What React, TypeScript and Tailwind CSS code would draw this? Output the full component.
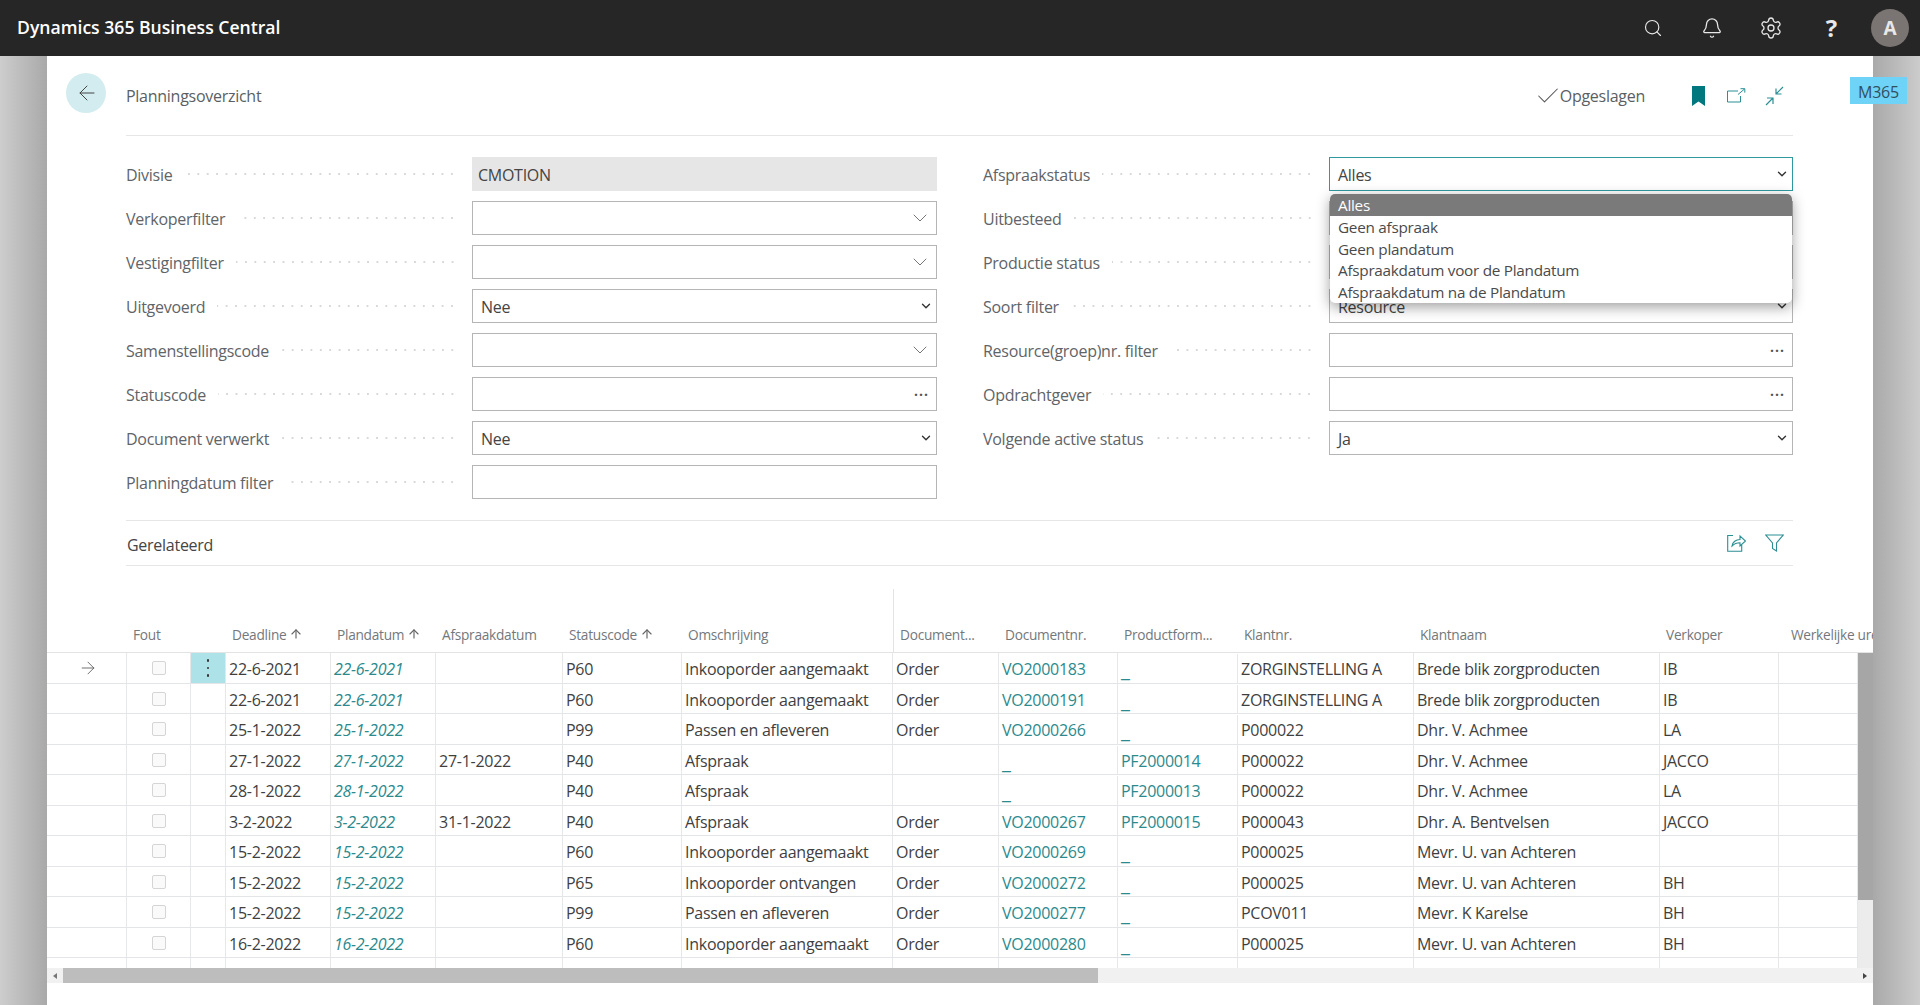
import { ArrowLeft, ArrowRight, ArrowUp, Bell, Check, ChevronDown, Search, Settings } from 'lucide-react';

const fields = {
  left: [
    { label: 'Divisie', value: 'CMOTION', kind: 'readonly' },
    { label: 'Verkoperfilter', value: '', kind: 'lookup' },
    { label: 'Vestigingfilter', value: '', kind: 'lookup' },
    { label: 'Uitgevoerd', value: 'Nee', kind: 'select' },
    { label: 'Samenstellingscode', value: '', kind: 'lookup' },
    { label: 'Statuscode', value: '', kind: 'dots' },
    { label: 'Document verwerkt', value: 'Nee', kind: 'select' },
    { label: 'Planningdatum filter', value: '', kind: 'text' },
  ],
  right: [
    { label: 'Afspraakstatus', value: 'Alles', kind: 'focus' },
    { label: 'Uitbesteed', value: '', kind: 'text' },
    { label: 'Productie status', value: '', kind: 'text' },
    { label: 'Soort filter', value: 'Resource', kind: 'select' },
    { label: 'Resource(groep)nr. filter', value: '', kind: 'dots' },
    { label: 'Opdrachtgever', value: '', kind: 'dots' },
    { label: 'Volgende active status', value: 'Ja', kind: 'select' },
  ],
};

const options = ['Geen afspraak', 'Geen plandatum', 'Afspraakdatum voor de Plandatum', 'Afspraakdatum na de Plandatum'];

const columns = [
  { title: 'Fout', sort: false },
  { title: '', sort: false },
  { title: 'Deadline', sort: true },
  { title: 'Plandatum', sort: true },
  { title: 'Afspraakdatum', sort: false },
  { title: 'Statuscode', sort: true },
  { title: 'Omschrijving', sort: false },
  { title: 'Document...', sort: false },
  { title: 'Documentnr.', sort: false },
  { title: 'Productform...', sort: false },
  { title: 'Klantnr.', sort: false },
  { title: 'Klantnaam', sort: false },
  { title: 'Verkoper', sort: false },
  { title: 'Werkelijke uren', sort: false },
];

const rows = [
  ['22-6-2021', '', 'P60', 'Inkooporder aangemaakt', 'Order', 'VO2000183', '_', 'ZORGINSTELLING A', 'Brede blik zorgproducten', 'IB'],
  ['22-6-2021', '', 'P60', 'Inkooporder aangemaakt', 'Order', 'VO2000191', '_', 'ZORGINSTELLING A', 'Brede blik zorgproducten', 'IB'],
  ['25-1-2022', '', 'P99', 'Passen en afleveren', 'Order', 'VO2000266', '_', 'P000022', 'Dhr. V. Achmee', 'LA'],
  ['27-1-2022', '27-1-2022', 'P40', 'Afspraak', '', '_', 'PF2000014', 'P000022', 'Dhr. V. Achmee', 'JACCO'],
  ['28-1-2022', '', 'P40', 'Afspraak', '', '_', 'PF2000013', 'P000022', 'Dhr. V. Achmee', 'LA'],
  ['3-2-2022', '31-1-2022', 'P40', 'Afspraak', 'Order', 'VO2000267', 'PF2000015', 'P000043', 'Dhr. A. Bentvelsen', 'JACCO'],
  ['15-2-2022', '', 'P60', 'Inkooporder aangemaakt', 'Order', 'VO2000269', '_', 'P000025', 'Mevr. U. van Achteren', ''],
  ['15-2-2022', '', 'P65', 'Inkooporder ontvangen', 'Order', 'VO2000272', '_', 'P000025', 'Mevr. U. van Achteren', 'BH'],
  ['15-2-2022', '', 'P99', 'Passen en afleveren', 'Order', 'VO2000277', '_', 'PCOV011', 'Mevr. K Karelse', 'BH'],
  ['16-2-2022', '', 'P60', 'Inkooporder aangemaakt', 'Order', 'VO2000280', '_', 'P000025', 'Mevr. U. van Achteren', 'BH'],
  ['', '', '', '', '', '', '', '', '', ''],
];

const Field = ({ label, value, kind }: { label: string; value: string; kind: string }) => {
  return (
    <div className="flex h-[34px] items-center">
      <div className="flex w-[346px] shrink-0 items-center pr-[15px]">
        <span className="whitespace-nowrap pt-[2px] text-[#5f6468]">{label}</span>
        <span className="ml-3 h-1 flex-1 bg-[radial-gradient(circle,#d6d8da_1px,transparent_1.3px)] bg-[length:9.4px_4px] bg-right bg-repeat-x" />
      </div>
      <div
        className={`flex h-full flex-1 items-center border pl-2 ${
          kind === 'readonly'
            ? 'border-[#e6e6e6] bg-[#e6e6e6] pl-[5px] text-[#444]'
            : kind === 'focus'
              ? 'border-[#2e9a9f] text-[#444]'
              : 'border-[#b5b5b5] text-[#444]'
        }`}
      >
        <span className="flex-1 pt-[2px]">{value}</span>
        {kind === 'lookup' && <ChevronDown size={24} strokeWidth={0.9} className="mr-[4px] text-[#666]" />}
        {(kind === 'select' || kind === 'focus') && <ChevronDown size={14} strokeWidth={2.4} className="mr-[3px] text-[#333]" />}
        {kind === 'dots' && <span className="mb-2 mr-[7px] text-[14px] font-bold tracking-[1px] text-[#555]">...</span>}
      </div>
    </div>
  );
};

const linkCell = (value: string) =>
  value === '_' ? 'mt-[1px] text-[21px] font-semibold leading-none tracking-normal text-[#2b8a8d]' : 'text-[#2b8a8d]';

export default function App() {
  return (
    <div className="relative flex h-[1005px] w-full flex-col overflow-hidden font-['Open_Sans',sans-serif] text-[16px] tracking-[-0.27px]">
      <header className="flex h-14 shrink-0 items-center bg-[#262626] text-white">
        <span className="mb-[2px] ml-[17px] text-[17.6px] font-semibold tracking-normal">Dynamics 365 Business Central</span>
        <div className="ml-auto flex items-center text-[#e8e8e8]">
          <Search size={20} strokeWidth={1.4} className="mr-[38px]" />
          <Bell size={22} strokeWidth={1.4} className="mr-[36px]" />
          <Settings size={24} strokeWidth={1.3} className="mr-[43px]" />
          <span className="mr-[34px] text-[24px] font-bold">?</span>
          <div className="mr-[11px] flex h-[38px] w-[38px] items-center justify-center rounded-full bg-[#7a7472] text-[19px] font-bold">
            A
          </div>
        </div>
      </header>

      <div className="flex min-h-0 flex-1">
        <div className="w-[47px] bg-linear-to-r from-[#cdcdcd] to-[#a9a9a9]" />

        <main className="flex min-w-0 flex-1 flex-col bg-white">
          <div className="flex h-[79px] shrink-0 items-center pl-[19px] pr-[80px]">
            <div className="mt-[-6px] flex h-10 w-10 items-center justify-center rounded-full bg-[#d3ecef]">
              <ArrowLeft size={24} strokeWidth={1} className="ml-[1px] text-[#444]" />
            </div>
            <span className="ml-5 pt-[1px] text-[#5a5f63]">Planningsoverzicht</span>
            <div className="ml-auto flex items-center">
              <Check size={28} strokeWidth={0.9} className="mr-[-2px] text-[#555]" />
              <span className="pt-[1px] text-[#5a5f63]">Opgeslagen</span>
              <svg viewBox="0 0 13 20" className="ml-[47px] h-[20px] w-[13px] fill-[#00787d]">
                <path d="M0 0h13v20l-6.5-4.5L0 20z" />
              </svg>
              <svg viewBox="0 0 19 15" fill="none" className="ml-[22px] h-[15px] w-[19px] stroke-[#2b8f94]">
                <path d="M11 3H.5v11h13V8M11 6.5 17.5 1M13.5.7h4.3v4" />
              </svg>
              <svg viewBox="0 0 19 20" fill="none" className="ml-[19px] mr-[9px] h-[20px] w-[19px] stroke-[#2b8f94]">
                <path d="M18 1 11 8M11 2.5V8h5.5M1 19l7-7M8 18v-6H2" strokeWidth="1.2" />
              </svg>
            </div>
          </div>

          <div className="ml-[79px] mr-[80px] border-t border-[#e6e6e6] pt-[21px]">
            <div className="grid grid-cols-[811px_1fr] gap-x-[46px]">
              <div className="flex flex-col gap-[10px]">
                {fields.left.map((f) => (
                  <Field key={f.label} {...f} />
                ))}
              </div>
              <div className="relative flex flex-col gap-[10px]">
                {fields.right.map((f) => (
                  <Field key={f.label} {...f} />
                ))}
                <div className="absolute left-[347px] right-[1px] top-[37px] h-[109px] overflow-hidden rounded-[5px] bg-white text-[15.3px] text-[#4a4a4a] shadow-[0_4px_14px_rgba(0,0,0,0.38)]">
                  <div className="h-[22px] bg-[#7a7a7a] pl-2 leading-[23px] text-white">Alles</div>
                  {options.map((o) => (
                    <div key={o} className="h-[21.7px] pl-2 leading-[22px]">
                      {o}
                    </div>
                  ))}
                </div>
              </div>
            </div>
            <div className="mt-[21px] flex h-[46px] items-center border-y border-[#e6e6e6] pl-[1px]">
              <span className="pt-[3px] text-[#444]">Gerelateerd</span>
              <svg viewBox="0 0 19 18" fill="none" className="ml-auto h-[18px] w-[19px] stroke-[#2b8f94]">
                <path d="M6 1.5H.7v15.8h14V11M5 12c.5-4 4-6.500 8-6.500V2l5.500 5L13 12V8.800C9.500 8.800 7 10 5 12z" strokeWidth="1.1" />
              </svg>
              <svg viewBox="0 0 19 18" fill="none" className="ml-[19px] mr-[9px] h-[18px] w-[19px] stroke-[#2b8f94]">
                <path d="M.8 1h17.400L11.500 9v8l-4-2.500V9z" strokeWidth="1.1" />
              </svg>
            </div>
          </div>

          <div className="mt-[23px] grid h-[64px] shrink-0 grid-cols-[80px_64px_35px_105px_105px_127px_119px_211px_106px_119px_120px_176px_246px_119px_94px] border-b border-[#e3e3e3] text-[13.7px] text-[#73787c]">
            <div />
            {columns.map((c, i) => (
              <div
                key={i}
                className={`flex h-full items-end overflow-hidden whitespace-nowrap pb-[6px] ${c.title === 'Werkelijke uren' ? 'pl-[12px]' : 'pl-[6px]'} ${c.title === 'Document...' ? 'border-l border-[#e3e3e3]' : ''}`}
              >
                {c.title}
                {c.sort && <ArrowUp size={14} strokeWidth={2} className="mb-[5px] ml-[3px] shrink-0 text-[#666]" />}
              </div>
            ))}
          </div>

          <div className="flex h-[315px] shrink-0">
            <div className="min-w-0 flex-1 overflow-hidden">
              {rows.map((r, i) => (
                <div
                  key={i}
                  className="grid h-[30.5px] grid-cols-[80px_64px_35px_105px_105px_127px_119px_211px_106px_119px_120px_176px_246px_119px_79px] border-b border-[#e3e5e8] text-[#3f3f3f] [&>div]:flex [&>div]:items-center [&>div]:overflow-hidden [&>div]:whitespace-nowrap [&>div]:border-r [&>div]:border-[#e6e7e9] [&>div]:pl-[3px] [&>div]:pt-[3px]"
                >
                  <div className="justify-center pl-0">
                    {i === 0 && <ArrowRight size={20} strokeWidth={1} className="mt-[-3px] text-[#555]" />}
                  </div>
                  <div className="justify-center pl-0 pr-[2px]">
                    <span className={`mt-[-2px] h-[14px] w-[14px] rounded-[2px] border border-[#d5d5d5] bg-[#fafafa] ${i === 10 ? 'translate-y-[15px]' : ''}`} />
                  </div>
                  <div className={`!pt-0 justify-center pl-0 pr-[3px] ${i === 0 ? 'bg-[#ace2e8]' : ''}`}>
                    {i === 0 && (
                      <span className="flex flex-col gap-[5px]">
                        <span className="h-[2.5px] w-[2.5px] rounded-full bg-[#333]" />
                        <span className="h-[2.5px] w-[2.5px] rounded-full bg-[#333]" />
                        <span className="h-[2.5px] w-[2.5px] rounded-full bg-[#333]" />
                      </span>
                    )}
                  </div>
                  <div>{r[0]}</div>
                  <div className="italic text-[#2b8a8d]">{r[0]}</div>
                  <div>{r[1]}</div>
                  <div>{r[2]}</div>
                  <div>{r[3]}</div>
                  <div>{r[4]}</div>
                  <div className={linkCell(r[5])}>{r[5]}</div>
                  <div className={linkCell(r[6])}>{r[6]}</div>
                  <div>{r[7]}</div>
                  <div>{r[8]}</div>
                  <div>{r[9]}</div>
                  <div className="border-r-0" />
                </div>
              ))}
            </div>
            <div className="flex w-[15px] shrink-0 flex-col bg-[#ececec]">
              <div className="h-[247px] bg-[#a6a6a6]" />
            </div>
          </div>

          <div className="flex h-[15px] shrink-0 items-center bg-[#f1f1f1]">
            <span className="ml-[6px] h-0 w-0 border-y-[3.5px] border-r-[4px] border-y-transparent border-r-[#777]" />
            <div className="ml-[6px] h-full w-[1035px] bg-[#bdbdbd]" />
            <span className="ml-auto mr-[6px] h-0 w-0 border-y-[3.5px] border-l-[4px] border-y-transparent border-l-[#444]" />
          </div>
        </main>

        <div className="w-[47px] bg-linear-to-r from-[#a9a9a9] to-[#cccccc]" />
      </div>

      <div className="absolute left-[1850px] top-[77px] flex h-[27px] w-[57px] items-center justify-center bg-[#6fd2f7] pt-[2px] text-[#30505f]">
        M365
      </div>
    </div>
  );
}
